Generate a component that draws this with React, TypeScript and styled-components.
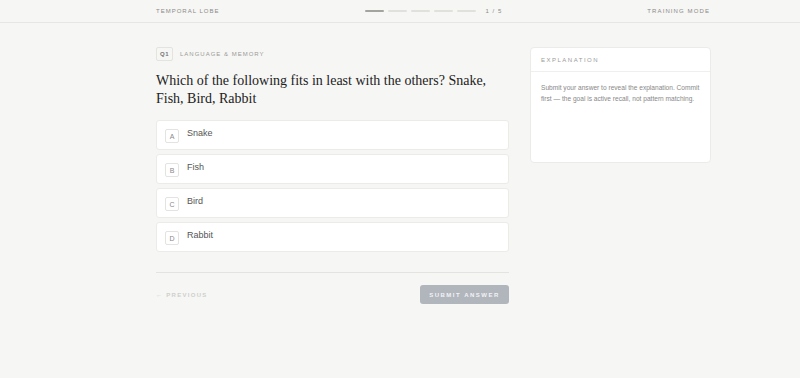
import React from "react";
import styled, { createGlobalStyle } from "styled-components";

const Global = createGlobalStyle`
  html, body { margin: 0; padding: 0; background: #f6f6f4; }
  body { font-family: "Liberation Sans", Arial, sans-serif; }
  * { box-sizing: border-box; }
`;

const Page = styled.div`
  width: 800px;
  height: 378px;
  background: #f6f6f4;
`;

const Header = styled.header`
  height: 23px;
  border-bottom: 1px solid #e6e6e3;
  display: flex;
  align-items: center;
  justify-content: space-between;
  padding: 0 90px 0 156px;
`;

const Caps = styled.span<{ $size?: number; $color?: string; $spacing?: number }>`
  font-size: ${(p) => p.$size ?? 6}px;
  letter-spacing: ${(p) => p.$spacing ?? 1.1}px;
  color: ${(p) => p.$color ?? "#8a8a87"};
  text-transform: uppercase;
  line-height: 1;
`;

const Progress = styled.div`
  display: flex;
  align-items: center;
  gap: 4px;
`;

const Seg = styled.div<{ $active?: boolean }>`
  width: 19px;
  height: 2px;
  border-radius: 1px;
  background: ${(p) => (p.$active ? "#a3a3a0" : "#e0e0dc")};
`;

const Count = styled.span`
  font-size: 6px;
  letter-spacing: 1px;
  color: #8a8a87;
  margin-left: 6px;
`;

const Body = styled.main`
  display: flex;
  gap: 21px;
  padding: 24px 0 0 156px;
`;

const Left = styled.section`
  width: 353px;
`;

const Meta = styled.div`
  display: flex;
  align-items: center;
  gap: 7px;
`;

const QBadge = styled.span`
  border: 1px solid #e3e3e0;
  border-radius: 2px;
  padding: 3px 3px;
  font-size: 6px;
  font-weight: 700;
  letter-spacing: 0.5px;
  color: #777;
  line-height: 1;
`;

const Question = styled.h1`
  font-family: "Liberation Serif", "Times New Roman", serif;
  font-weight: 400;
  font-size: 14px;
  line-height: 18px;
  color: #222;
  margin: 11px 0 12px;
`;

const Options = styled.div`
  display: flex;
  flex-direction: column;
  gap: 4px;
`;

const Option = styled.div`
  height: 30px;
  background: #fff;
  border: 1px solid #ebebe8;
  border-radius: 3px;
  display: flex;
  align-items: center;
  padding: 0 8px;
  gap: 8px;
`;

const Letter = styled.span`
  width: 14px;
  height: 14px;
  border: 1px solid #e3e3e0;
  border-radius: 2px;
  display: flex;
  align-items: center;
  justify-content: center;
  font-size: 7px;
  color: #888;
  margin-top: 2px;
`;

const OptText = styled.span`
  font-size: 9px;
  color: #555;
  margin-top: -4px;
`;

const Divider = styled.hr`
  border: 0;
  border-top: 1px solid #e3e3e0;
  margin: 20px 0 12px;
`;

const Footer = styled.div`
  display: flex;
  align-items: center;
  justify-content: space-between;
`;

const Prev = styled.span`
  font-size: 6px;
  letter-spacing: 1.3px;
  color: #cfcfcc;
  font-weight: 700;
`;

const Submit = styled.button`
  width: 89px;
  height: 19px;
  border: 0;
  border-radius: 3px;
  background: #b1b5bc;
  color: #f2f3f5;
  font-family: "Liberation Sans", Arial, sans-serif;
  font-size: 6px;
  font-weight: 700;
  letter-spacing: 1.5px;
  padding: 0;
`;

const Card = styled.aside`
  width: 181px;
  height: 116px;
  background: #fff;
  border: 1px solid #ebebe8;
  border-radius: 4px;
  align-self: flex-start;
`;

const CardHead = styled.div`
  height: 24px;
  border-bottom: 1px solid #efefec;
  display: flex;
  align-items: center;
  padding: 0 10px;
`;

const CardBody = styled.p`
  margin: 0;
  padding: 10px 4px 10px 10px;
  font-size: 6.6px;
  line-height: 11px;
  color: #888;
`;

const opts = ["Snake", "Fish", "Bird", "Rabbit"];

export default function App() {
  return (
    <Page>
      <Global />
      <Header>
        <Caps $spacing={1}>Temporal Lobe</Caps>
        <Progress>
          {[0, 1, 2, 3, 4].map((i) => (
            <Seg key={i} $active={i === 0} />
          ))}
          <Count>1 / 5</Count>
        </Progress>
        <Caps>Training Mode</Caps>
      </Header>
      <Body>
        <Left>
          <Meta>
            <QBadge>Q1</QBadge>
            <Caps $color="#9a9a97" $spacing={1}>Language &amp; Memory</Caps>
          </Meta>
          <Question>
            Which of the following fits in least with the others? Snake, Fish, Bird, Rabbit
          </Question>
          <Options>
            {opts.map((o, i) => (
              <Option key={o}>
                <Letter>{"ABCD"[i]}</Letter>
                <OptText>{o}</OptText>
              </Option>
            ))}
          </Options>
          <Divider />
          <Footer>
            <Prev>← PREVIOUS</Prev>
            <Submit>SUBMIT ANSWER</Submit>
          </Footer>
        </Left>
        <Card>
          <CardHead>
            <Caps $color="#9a9a97" $spacing={1.5}>Explanation</Caps>
          </CardHead>
          <CardBody>
            Submit your answer to reveal the explanation. Commit first — the goal is active recall, not pattern matching.
          </CardBody>
        </Card>
      </Body>
    </Page>
  );
}
